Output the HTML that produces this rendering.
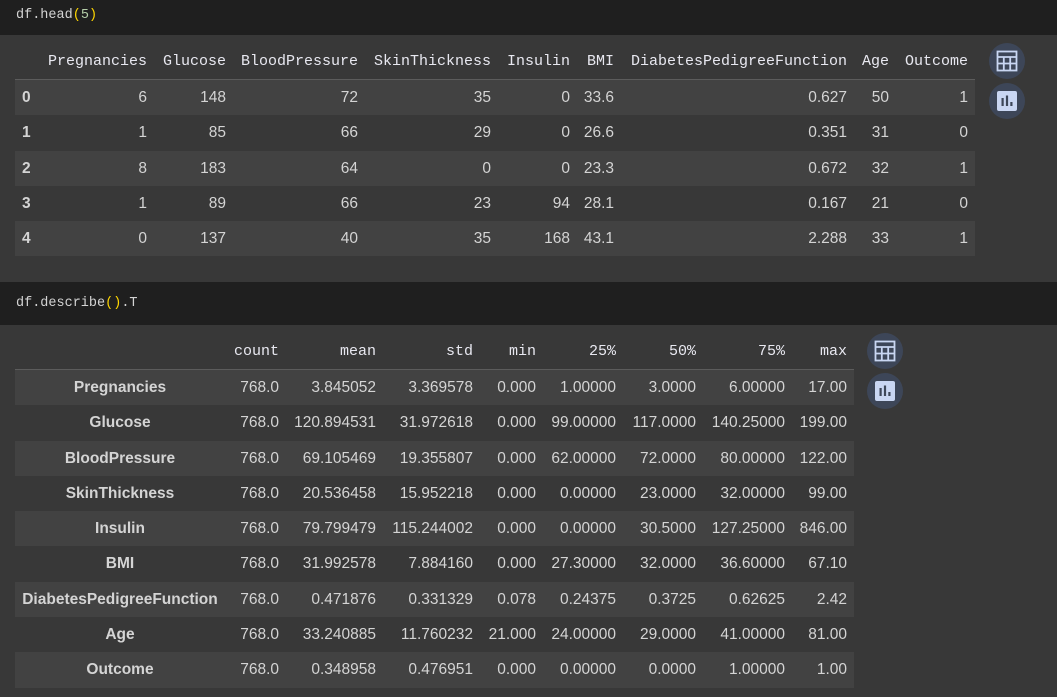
<!DOCTYPE html>
<html><head><meta charset="utf-8"><style>
*{margin:0;padding:0;box-sizing:border-box}
body{width:1057px;height:697px;background:#383838;position:relative;overflow:hidden;font-family:"Liberation Sans","Noto Sans CJK KR",sans-serif;color:#d4d4d4}
.code{position:absolute;left:0;width:1057px;background:#1f1f1f;font-family:"Liberation Mono",monospace;font-size:13.5px;color:#d4d4d4;padding-left:16px}
.code i{font-style:normal;color:#ffd700}
.code b{font-weight:normal;color:#b5cea8}
.r{position:absolute;left:15px;height:35px}
.l{background:#424242}
.c{position:absolute;top:0;height:35px;line-height:36px;text-align:right;font-size:15.5px;white-space:nowrap}
.h{font-family:"Liberation Mono",monospace;font-size:15px;color:#e8e8f0;font-weight:normal}
.bl{font-weight:bold}
.sep{position:absolute;height:1px;background:#5c5c5c;left:15px}
.ic{position:absolute;width:36px;height:36px;border-radius:50%;background:#3d4658}
</style></head><body>
<div class="code" style="top:0;height:35px;line-height:31px">df.head<i>(</i><b>5</b><i>)</i></div>

<div class="r" style="top:44px;width:960px">
<span class="c h" style="right:828px">Pregnancies</span><span class="c h" style="right:749px">Glucose</span><span class="c h" style="right:617px">BloodPressure</span><span class="c h" style="right:484px">SkinThickness</span><span class="c h" style="right:405px">Insulin</span><span class="c h" style="right:361px">BMI</span><span class="c h" style="right:128px">DiabetesPedigreeFunction</span><span class="c h" style="right:86px">Age</span><span class="c h" style="right:7px">Outcome</span></div>
<div class="sep" style="top:79px;width:960px"></div>
<div class="r l" style="top:80px;width:960px"><span class="c bl" style="left:7px">0</span><span class="c" style="right:828px">6</span><span class="c" style="right:749px">148</span><span class="c" style="right:617px">72</span><span class="c" style="right:484px">35</span><span class="c" style="right:405px">0</span><span class="c" style="right:361px">33.6</span><span class="c" style="right:128px">0.627</span><span class="c" style="right:86px">50</span><span class="c" style="right:7px">1</span></div>
<div class="r" style="top:115px;width:960px"><span class="c bl" style="left:7px">1</span><span class="c" style="right:828px">1</span><span class="c" style="right:749px">85</span><span class="c" style="right:617px">66</span><span class="c" style="right:484px">29</span><span class="c" style="right:405px">0</span><span class="c" style="right:361px">26.6</span><span class="c" style="right:128px">0.351</span><span class="c" style="right:86px">31</span><span class="c" style="right:7px">0</span></div>
<div class="r l" style="top:151px;width:960px"><span class="c bl" style="left:7px">2</span><span class="c" style="right:828px">8</span><span class="c" style="right:749px">183</span><span class="c" style="right:617px">64</span><span class="c" style="right:484px">0</span><span class="c" style="right:405px">0</span><span class="c" style="right:361px">23.3</span><span class="c" style="right:128px">0.672</span><span class="c" style="right:86px">32</span><span class="c" style="right:7px">1</span></div>
<div class="r" style="top:186px;width:960px"><span class="c bl" style="left:7px">3</span><span class="c" style="right:828px">1</span><span class="c" style="right:749px">89</span><span class="c" style="right:617px">66</span><span class="c" style="right:484px">23</span><span class="c" style="right:405px">94</span><span class="c" style="right:361px">28.1</span><span class="c" style="right:128px">0.167</span><span class="c" style="right:86px">21</span><span class="c" style="right:7px">0</span></div>
<div class="r l" style="top:221px;width:960px"><span class="c bl" style="left:7px">4</span><span class="c" style="right:828px">0</span><span class="c" style="right:749px">137</span><span class="c" style="right:617px">40</span><span class="c" style="right:484px">35</span><span class="c" style="right:405px">168</span><span class="c" style="right:361px">43.1</span><span class="c" style="right:128px">2.288</span><span class="c" style="right:86px">33</span><span class="c" style="right:7px">1</span></div>

<div class="ic" style="left:989px;top:43px"><svg width="36" height="36"><g fill="none" stroke="#c9d6f2" stroke-width="1.8"><rect x="8.5" y="8.5" width="19" height="19"/><line x1="8.5" y1="14" x2="27.5" y2="14"/><line x1="8.5" y1="20.5" x2="27.5" y2="20.5"/><line x1="14.8" y1="14" x2="14.8" y2="27.5"/><line x1="21.2" y1="14" x2="21.2" y2="27.5"/></g></svg></div>
<div class="ic" style="left:989px;top:83px"><svg width="36" height="36"><rect x="8" y="8" width="20" height="20" rx="2" fill="#c9d6f2"/><g fill="#3d4658"><rect x="12.5" y="15" width="2.2" height="8"/><rect x="16.9" y="12.5" width="2.2" height="10.5"/><rect x="21.3" y="19" width="2.2" height="4"/></g></svg></div>

<div class="code" style="top:282px;height:43px;line-height:44px">df.describe<i>()</i>.T</div>

<div class="r" style="top:334px;width:839px">
<span class="c h" style="right:575px">count</span><span class="c h" style="right:478px">mean</span><span class="c h" style="right:381px">std</span><span class="c h" style="right:318px">min</span><span class="c h" style="right:238px">25%</span><span class="c h" style="right:158px">50%</span><span class="c h" style="right:69px">75%</span><span class="c h" style="right:7px">max</span></div>
<div class="sep" style="top:369px;width:839px"></div>

<div class="r l" style="top:370px;width:839px"><span class="c bl" style="left:0;width:210px;text-align:center">Pregnancies</span><span class="c" style="right:575px">768.0</span><span class="c" style="right:478px">3.845052</span><span class="c" style="right:381px">3.369578</span><span class="c" style="right:318px">0.000</span><span class="c" style="right:238px">1.00000</span><span class="c" style="right:158px">3.0000</span><span class="c" style="right:69px">6.00000</span><span class="c" style="right:7px">17.00</span></div>
<div class="r" style="top:405px;width:839px"><span class="c bl" style="left:0;width:210px;text-align:center">Glucose</span><span class="c" style="right:575px">768.0</span><span class="c" style="right:478px">120.894531</span><span class="c" style="right:381px">31.972618</span><span class="c" style="right:318px">0.000</span><span class="c" style="right:238px">99.00000</span><span class="c" style="right:158px">117.0000</span><span class="c" style="right:69px">140.25000</span><span class="c" style="right:7px">199.00</span></div>
<div class="r l" style="top:441px;width:839px"><span class="c bl" style="left:0;width:210px;text-align:center">BloodPressure</span><span class="c" style="right:575px">768.0</span><span class="c" style="right:478px">69.105469</span><span class="c" style="right:381px">19.355807</span><span class="c" style="right:318px">0.000</span><span class="c" style="right:238px">62.00000</span><span class="c" style="right:158px">72.0000</span><span class="c" style="right:69px">80.00000</span><span class="c" style="right:7px">122.00</span></div>
<div class="r" style="top:476px;width:839px"><span class="c bl" style="left:0;width:210px;text-align:center">SkinThickness</span><span class="c" style="right:575px">768.0</span><span class="c" style="right:478px">20.536458</span><span class="c" style="right:381px">15.952218</span><span class="c" style="right:318px">0.000</span><span class="c" style="right:238px">0.00000</span><span class="c" style="right:158px">23.0000</span><span class="c" style="right:69px">32.00000</span><span class="c" style="right:7px">99.00</span></div>
<div class="r l" style="top:511px;width:839px"><span class="c bl" style="left:0;width:210px;text-align:center">Insulin</span><span class="c" style="right:575px">768.0</span><span class="c" style="right:478px">79.799479</span><span class="c" style="right:381px">115.244002</span><span class="c" style="right:318px">0.000</span><span class="c" style="right:238px">0.00000</span><span class="c" style="right:158px">30.5000</span><span class="c" style="right:69px">127.25000</span><span class="c" style="right:7px">846.00</span></div>
<div class="r" style="top:546px;width:839px"><span class="c bl" style="left:0;width:210px;text-align:center">BMI</span><span class="c" style="right:575px">768.0</span><span class="c" style="right:478px">31.992578</span><span class="c" style="right:381px">7.884160</span><span class="c" style="right:318px">0.000</span><span class="c" style="right:238px">27.30000</span><span class="c" style="right:158px">32.0000</span><span class="c" style="right:69px">36.60000</span><span class="c" style="right:7px">67.10</span></div>
<div class="r l" style="top:582px;width:839px"><span class="c bl" style="left:0;width:210px;text-align:center">DiabetesPedigreeFunction</span><span class="c" style="right:575px">768.0</span><span class="c" style="right:478px">0.471876</span><span class="c" style="right:381px">0.331329</span><span class="c" style="right:318px">0.078</span><span class="c" style="right:238px">0.24375</span><span class="c" style="right:158px">0.3725</span><span class="c" style="right:69px">0.62625</span><span class="c" style="right:7px">2.42</span></div>
<div class="r" style="top:617px;width:839px"><span class="c bl" style="left:0;width:210px;text-align:center">Age</span><span class="c" style="right:575px">768.0</span><span class="c" style="right:478px">33.240885</span><span class="c" style="right:381px">11.760232</span><span class="c" style="right:318px">21.000</span><span class="c" style="right:238px">24.00000</span><span class="c" style="right:158px">29.0000</span><span class="c" style="right:69px">41.00000</span><span class="c" style="right:7px">81.00</span></div>
<div class="r l" style="top:652px;width:839px;height:36px"><span class="c bl" style="left:0;width:210px;text-align:center">Outcome</span><span class="c" style="right:575px">768.0</span><span class="c" style="right:478px">0.348958</span><span class="c" style="right:381px">0.476951</span><span class="c" style="right:318px">0.000</span><span class="c" style="right:238px">0.00000</span><span class="c" style="right:158px">0.0000</span><span class="c" style="right:69px">1.00000</span><span class="c" style="right:7px">1.00</span></div>

<div class="ic" style="left:867px;top:333px"><svg width="36" height="36"><g fill="none" stroke="#c9d6f2" stroke-width="1.8"><rect x="8.5" y="8.5" width="19" height="19"/><line x1="8.5" y1="14" x2="27.5" y2="14"/><line x1="8.5" y1="20.5" x2="27.5" y2="20.5"/><line x1="14.8" y1="14" x2="14.8" y2="27.5"/><line x1="21.2" y1="14" x2="21.2" y2="27.5"/></g></svg></div>
<div class="ic" style="left:867px;top:373px"><svg width="36" height="36"><rect x="8" y="8" width="20" height="20" rx="2" fill="#c9d6f2"/><g fill="#3d4658"><rect x="12.5" y="15" width="2.2" height="8"/><rect x="16.9" y="12.5" width="2.2" height="10.5"/><rect x="21.3" y="19" width="2.2" height="4"/></g></svg></div>
</body></html>
